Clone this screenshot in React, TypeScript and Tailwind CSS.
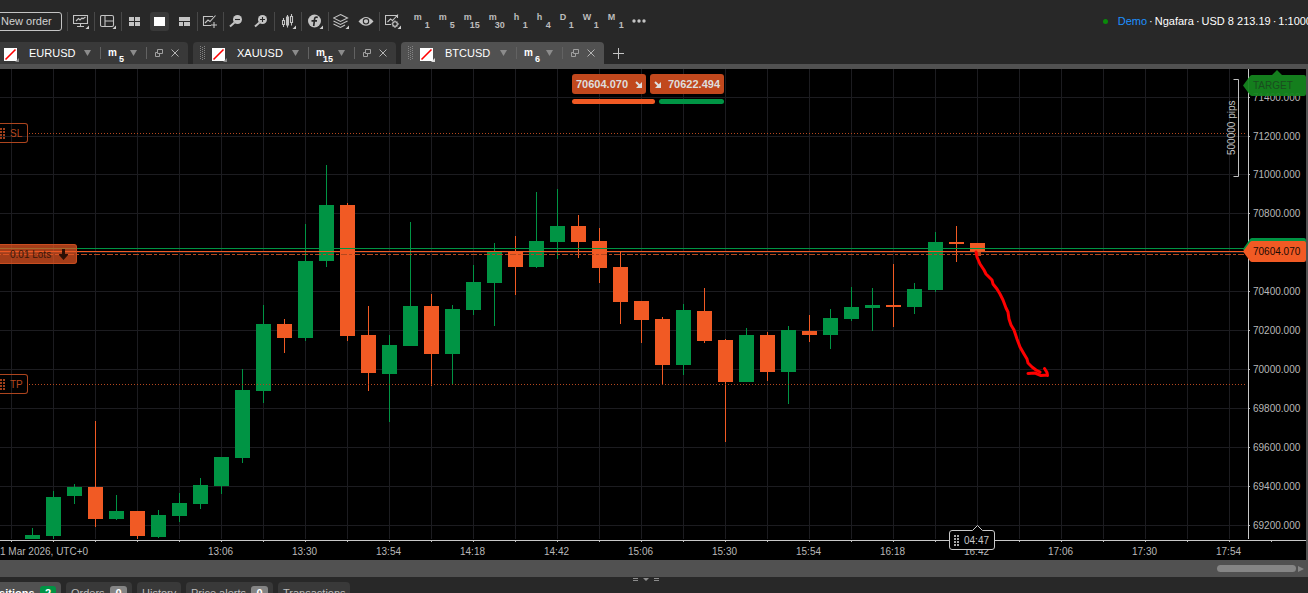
import React from 'react';

type Candle = [number, number, number, number, 'g' | 'o'];

const GREEN = '#009444';
const ORANGE = '#f15a24';

// high, body top, body bottom, low (pixels from the top of the plot)
const candles: Candle[] = [
  [459, 466, 470, 470, 'g'], [422, 428, 467, 470, 'g'], [415, 418, 427, 435, 'g'], [352, 418, 450, 458, 'o'],
  [426, 442, 450, 451, 'g'], [442, 442, 467, 470, 'o'], [441, 446, 468, 469, 'g'], [424, 434, 447, 453, 'g'],
  [409, 416, 435, 440, 'g'], [388, 388, 417, 425, 'g'], [300, 321, 389, 394, 'g'], [236, 255, 322, 334, 'g'],
  [250, 255, 269, 284, 'o'], [155, 192, 269, 272, 'g'], [96, 136, 192, 198, 'g'], [134, 136, 267, 272, 'o'],
  [237, 266, 304, 322, 'o'], [266, 276, 305, 353, 'g'], [153, 237, 277, 277, 'g'], [225, 237, 285, 317, 'o'],
  [236, 240, 285, 315, 'g'], [196, 213, 241, 246, 'g'], [174, 182, 214, 257, 'g'], [167, 182, 198, 226, 'o'],
  [123, 172, 198, 199, 'g'], [120, 157, 173, 190, 'g'], [146, 157, 173, 189, 'o'], [159, 172, 199, 214, 'o'],
  [182, 198, 233, 255, 'o'], [232, 232, 251, 274, 'o'], [248, 250, 296, 315, 'o'], [235, 241, 296, 306, 'g'],
  [219, 242, 272, 274, 'o'], [270, 271, 313, 373, 'o'], [259, 266, 313, 313, 'g'], [263, 266, 303, 312, 'o'],
  [257, 261, 303, 335, 'g'], [246, 262, 266, 273, 'o'], [240, 249, 266, 280, 'g'], [218, 238, 250, 252, 'g'],
  [219, 236, 239, 262, 'g'], [195, 236, 238, 258, 'o'], [214, 220, 238, 245, 'g'], [163, 173, 221, 223, 'g'],
  [157, 173, 175, 193, 'o'], [174, 174, 183, 183, 'o'],
];

const prices: [number, string][] = [
  [28, '71400.000'], [67, '71200.000'], [105, '71000.000'], [144, '70800.000'], [183, '70600.000'], [222, '70400.000'],
  [261, '70200.000'], [300, '70000.000'], [339, '69800.000'], [378, '69600.000'], [417, '69400.000'], [456, '69200.000'],
];

const times = ['13:06', '13:30', '13:54', '14:18', '14:42', '15:06', '15:30', '15:54', '16:18', '16:42', '17:06', '17:30', '17:54'];
const columns = Array.from({ length: 31 }, (_, i) => 11 + i * 42);

const timeframes: [string, string, string][] = [
  ['m', '1', 'w-4'], ['m', '5', 'w-4'], ['m', '15', 'w-4'], ['m', '30', 'w-4'], ['h', '1', 'w-[14px]'],
  ['h', '4', 'w-[14px]'], ['D', '1', 'w-[14px]'], ['W', '1', 'w-4'], ['M', '1', 'w-4'],
];

function Sep() {
  return <span className="h-[19px] w-px shrink-0 bg-[#484848]" />;
}

function Tool({ label, children, wide, menu }: { label: string; children: React.ReactNode; wide?: boolean; menu?: boolean }) {
  return (
    <button type="button" aria-label={label} className={`relative flex h-5 shrink-0 items-center justify-center ${wide ? 'w-[26px]' : 'w-[25px]'}`}>
      <svg width="16" height="16" viewBox="0 0 16 16" fill="none" stroke="#c4c4c4" strokeWidth="1.1">
        {children}
        {menu && <path d="M16 12.5V16h-3.5z" fill="#d0d0d0" stroke="none" />}
      </svg>
    </button>
  );
}

function Down() {
  return <svg width="7" height="6" viewBox="0 0 7 6" className="shrink-0"><path d="M0 0h7L3.500 6z" fill="#8c8c8c" /></svg>;
}

function Grip({ color }: { color: string }) {
  return (
    <svg width="5" height="11" viewBox="0 0 5 11" fill={color} className="shrink-0">
      {[0, 3, 6, 9].map((y) => (
        <g key={y}><rect y={y} width="2" height="2" /><rect x="3" y={y} width="2" height="2" /></g>
      ))}
    </svg>
  );
}

function SymbolTab({ name, tf, active, first }: { name: string; tf: string; active?: boolean; first?: boolean }) {
  return (
    <div className={`flex h-[22px] w-[203px] shrink-0 items-center rounded-t-[4px] ${active ? 'bg-[#515151]' : 'bg-[#393939]'} ${first ? '-ml-[15px]' : ''}`}>
      <svg width="5" height="14" viewBox="0 0 5 14" fill="#858585" className="ml-[7px]">
        {[0, 2, 4, 6, 8, 10, 12].map((y) => (
          <g key={y}><rect y={y} width="1" height="1" /><rect x="2" y={y + 1} width="1" height="1" /><rect x="4" y={y} width="1" height="1" /></g>
        ))}
      </svg>
      <button type="button" aria-label={`${name} link colour`} className="ml-[7px] mt-[3px]">
        <svg width="15" height="14" viewBox="0 0 15 14">
          <rect width="13" height="13" fill="#fff" />
          <path d="M1.500 11.500L11.500 1.500" stroke="#f00" strokeWidth="1.600" />
          <path d="M15 10v4h-4z" fill={active ? '#ddd' : '#8a8a8a'} />
        </svg>
      </button>
      <button type="button" className="ml-[10px] flex w-[62px] items-center justify-between text-left text-[11px] leading-4 text-white">
        {name}
        <Down />
      </button>
      <span className="ml-[9px] h-3 w-px bg-[#626262]" />
      <button type="button" aria-label={`m${tf}`} className="ml-[7px] flex w-[29px] items-center justify-between text-white">
        <span className="flex text-[10px] leading-4 font-bold">
          m<span className={`${tf.length > 1 ? '-ml-[2px]' : 'ml-0.5'} translate-y-[6px] text-[9px]`}>{tf}</span>
        </span>
        <Down />
      </button>
      <span className="ml-[9px] h-3 w-px bg-[#626262]" />
      <button type="button" aria-label="Detach" className="ml-[8px]">
        <svg width="8" height="8" viewBox="0 0 8 8" fill="none" stroke="#a0a0a0">
          <path d="M2.500.5h5v4h-5zM2.500 3.500h-2v4h4v-3" />
        </svg>
      </button>
      <button type="button" aria-label="Close" className="ml-[8px]">
        <svg width="8" height="8" viewBox="0 0 8 8" stroke="#b4b4b4"><path d="M.5.5l7 7M7.500.5l-7 7" /></svg>
      </button>
    </div>
  );
}

function Toolbar() {
  return (
    <header className="flex h-[42px] shrink-0 items-center">
      <button type="button" className="-ml-2 mr-[5px] h-[19px] shrink-0 rounded-[3px] border border-[#c4c4c4] pr-[9px] pl-2 text-[11px] leading-4 text-[#d2d2d2]">New order</button>
      <Sep />
      <Tool label="Chart type" wide menu>
        <path d="M.5 2.500h14v8H.5zM7.500 10.500v2.500M4 13.500h7M3 8l2.500-2.500 1.500 1.500 2-2 1 .8L12.500 4" />
      </Tool>
      <Sep />
      <Tool label="Layout" wide menu>
        <rect x=".5" y="2.500" width="13" height="11" rx="1.500" /><path d="M5 2.500v11M5 8h8.500" />
      </Tool>
      <Sep />
      <Tool label="Multi chart"><path fill="#c4c4c4" stroke="none" d="M3 4h5v4H3zM9 4h5v4H9zM3 9h5v4H3zM9 9h5v4H9z" /></Tool>
      <button type="button" aria-label="Single chart" className="flex w-[25px] shrink-0 items-center justify-center">
        <span className="flex size-[19px] items-center justify-center rounded-[3px] bg-[#393939]"><span className="h-[9px] w-[11px] bg-white" /></span>
      </button>
      <Tool label="Free chart"><path fill="#c4c4c4" stroke="none" d="M3 4h11v4H3zM3 9h4v4H3zM8 9h6v4H8z" /></Tool>
      <Sep />
      <Tool label="New chart">
        <path d="M11 3.500H1.500v9H9M3 10l3-3 2 1.500 5.500-6M12 9v6M9 12h6" />
      </Tool>
      <Sep />
      <Tool label="Zoom out">
        <circle cx="9.500" cy="6.500" r="4.500" fill="#c4c4c4" stroke="none" /><path d="M6.500 9.500L2 13.500" strokeWidth="2" /><path d="M7 6.500h5" stroke="#282828" />
      </Tool>
      <Tool label="Zoom in">
        <circle cx="9.500" cy="6.500" r="4.500" fill="#c4c4c4" stroke="none" /><path d="M6.500 9.500L2 13.500" strokeWidth="2" /><path d="M7 6.500h5M9.500 4v5" stroke="#282828" />
      </Tool>
      <Sep />
      <Tool label="Chart style" wide menu>
        <path d="M3.500 5v2M3.500 12v2M7.500 2v2M7.500 12v2.500M11.500 1v2.500M11.500 10v2.500M2.500 7.500h2v4h-2zM10.500 3.500h2v6h-2z" /><path d="M6.500 4h2v8h-2z" fill="#c4c4c4" />
      </Tool>
      <Sep />
      <Tool label="Indicators" wide menu>
        <circle cx="7.500" cy="8" r="6.500" fill="#c4c4c4" stroke="none" /><path d="M10.800 4.500C8.500 3.500 7.700 4.600 7.500 6.500L6.700 13M4.500 7.800h5.500" stroke="#282828" strokeWidth="1.700" />
      </Tool>
      <Sep />
      <Tool label="Objects" menu>
        <path d="M7.500 1.500l7 3.500-7 3.500L.5 5zM.5 8l7 3.500 7-3.500M.5 11l7 3.500L12 12" />
      </Tool>
      <Tool label="Visibility">
        <path d="M.5 8.500Q8-.500 15.500 8.500 8 17 .5 8.500z" fill="#c4c4c4" stroke="none" /><circle cx="8" cy="8.300" r="2.700" stroke="#282828" />
      </Tool>
      <Sep />
      <Tool label="Chart settings" wide menu>
        <path d="M12.500 5V2.500H.5v9H6M2.500 9l3-3 2 1.500 5.500-6" /><circle cx="10" cy="11" r="2.300" /><path d="M10 7.500v1.200M10 13.300v1.700M6.500 11h1.200M12.300 11h1.700M7.600 8.600l.8.800M11.600 12.600l.8.800M12.400 8.600l-.8.800M7.600 13.400l.8-.8" />
      </Tool>
      <nav aria-label="Timeframes" className="ml-2 flex shrink-0 gap-[9px] pb-px text-[#bdbdbd]">
        {timeframes.map(([a, b, w]) => (
          <button key={a + b} type="button" className={`flex h-5 shrink-0 justify-between pt-px font-bold ${w}`}>
            <span className="text-[9px] leading-[11px]">{a}</span>
            <span className={`pt-2 text-[9px] leading-[11px] ${b.length > 1 ? '-ml-[2px]' : ''}`}>{b}</span>
          </button>
        ))}
      </nav>
      <button type="button" aria-label="More" className="ml-2 shrink-0">
        <svg width="14" height="4" viewBox="0 0 14 4" fill="#c4c4c4"><circle cx="2" cy="2" r="1.700" /><circle cx="7" cy="2" r="1.700" /><circle cx="12" cy="2" r="1.700" /></svg>
      </button>
      <div className="-mr-1 ml-auto flex shrink-0 items-center gap-0.5 text-[11px] leading-4 whitespace-nowrap text-white">
        <span className="mr-2 size-[5px] rounded-full bg-[#0a8a0a]" />
        <a href="#account" className="text-[#1e90ff]">Demo</a>
        <span>·</span>
        <span>Ngafara</span>
        <span>·</span>
        <span>USD 8 213.19</span>
        <span>·</span>
        <span>1:1000</span>
      </div>
    </header>
  );
}

function Plot() {
  return (
    <svg width="100%" height="471" className="block">
      <g fill="#1c1c20">
        {columns.map((x) => <rect key={x} x={x} y="0" width="1" height="470" />)}
        {prices.map(([y]) => <rect key={y} x="0" y={y} width="100%" height="1" />)}
      </g>
      {candles.map(([hi, top, bottom, lo, c], i) => (
        <g key={i} fill={c === 'g' ? GREEN : ORANGE}>
          <rect x={32 + i * 21} y={hi} width="1" height={lo - hi} />
          <rect x={25 + i * 21} y={top} width="15" height={bottom - top} />
        </g>
      ))}
      <g shapeRendering="crispEdges">
        <path d="M29 64.500H1246M29 315.500H1246" stroke="#b5481f" strokeDasharray="1 2" />
        <path d="M-2 185.500H1244" stroke="#b5481f" strokeDasharray="3 2 6 2" />
        <path d="M0 179.500H1246" stroke={GREEN} />
        <path d="M0 182.500H1246" stroke={ORANGE} />
      </g>
      <rect x="977" y="183" width="4" height="4" fill="#b5481f" />
      <g fill="none" stroke="#f00" strokeWidth="3" strokeLinejoin="round" strokeLinecap="round">
        <path d="M976 183l1 5 3 7 4 6 2 4 6 6 1 4 4 5 3 5 3 6 3 8 2 4 1 7 2 6 3 5 3 9 3 8 4 7 3 5 1 4 4 4 4 3 4 2" />
        <path d="M1028 304.500l7-.5 6 2.500 6-.5M1044.500 299.500l2.500 4 .5 3" />
      </g>
      <path d="M1233.500 10.500h5v97h-5" fill="none" stroke="#c0c0c0" />
      <text transform="translate(1235 86) rotate(-90)" fill="#c0c0c0" fontSize="10">500000 pips</text>
    </svg>
  );
}

function PriceAxis() {
  return (
    <div className="relative w-[58px] shrink-0">
      <svg width="58" height="471" className="block" fontSize="10" fill="#b8b8b8">
        <rect width="1" height="470" fill="#c8c8c8" />
        {prices.map(([y, label]) => (
          <g key={y}><rect x="1" y={y} width="1" height="1" /><text x="5" y={y + 4}>{label}</text></g>
        ))}
      </svg>
      <svg width="63" height="195" className="absolute top-0 -left-[5px]" fontSize="10">
        <path d="M0 16.500L7 7q1-1 2-1h20l5-5 5 5h22q2 0 2 2v17q0 2-2 2H9q-1 0-2-1z" fill="#15851f" fillOpacity=".95" />
        <text x="10" y="20" fill="#1a4d1f">TARGET</text>
        <path d="M0 180L7 170q1-1 2-1h52q2 0 2 2v15H4z" fill={GREEN} />
        <path d="M0 182.500L7 173q1-1 2-1h52q2 0 2 2v17q0 2-2 2H9q-1 0-2-1z" fill={ORANGE} />
        <text x="10" y="186" fill="#1a0a04">70604.070</text>
      </svg>
    </div>
  );
}

function QuoteArrow() {
  return <svg width="7" height="7" viewBox="0 0 7 7" className="shrink-0"><path d="M1 1l4 4" stroke="#dedede" strokeWidth="2" /><path d="M7 1v6H1z" fill="#dedede" /></svg>;
}

function Level({ name, top }: { name: string; top: string }) {
  return (
    <button type="button" className={`absolute left-0 flex h-5 w-7 items-center gap-[5px] rounded-r-[3px] border border-l-0 border-[#ad451e] text-[10px] leading-4 text-[#b5481f] ${top}`}>
      <Grip color="#a03f1b" /><span className="pt-0.5">{name}</span>
    </button>
  );
}

function Chart() {
  return (
    <section aria-label="BTCUSD chart" className="relative shrink-0 overflow-hidden border-r-2 border-[#515151] bg-black">
      <div className="flex">
        <div className="relative min-w-0 flex-1">
          <Plot />
          <Level name="SL" top="top-[54px]" />
          <Level name="TP" top="top-[305px]" />
          <button type="button" className="absolute top-[175px] left-0 flex h-5 w-[77px] items-center justify-between rounded-r-[3px] border border-l-0 border-[#c84d20] bg-[#ea5723]/70 pr-[8px] pl-[10px] text-[10px] leading-4 text-[#3a1608]">
            <span className="pt-0.5">0.01 Lots</span>
            <svg width="9" height="11" viewBox="0 0 9 11" fill="#2a0f05"><path d="M3 0h3v5h3v1L4.500 11 0 6V5h3z" /></svg>
          </button>
          <div className="absolute top-[5px] left-[572px] text-[11px] font-bold text-[#dedede]">
            <div className="flex gap-1">
              <button type="button" className="flex h-5 w-[74px] items-center justify-between rounded-[3px] bg-[#c1481d] px-1">70604.070<QuoteArrow /></button>
              <button type="button" className="flex h-5 w-[74px] items-center justify-between rounded-[3px] bg-[#c1481d] px-1"><QuoteArrow />70622.494</button>
            </div>
            <div className="mt-[5px] flex gap-1">
              <span className="h-[5px] w-[83px] rounded-full bg-[#f15a24]" />
              <span className="h-[5px] w-[65px] rounded-full bg-[#009444]" />
            </div>
          </div>
        </div>
        <PriceAxis />
      </div>
      <svg width="100%" height="20" className="block" fontSize="10" fill="#b8b8b8">
        <rect width="100%" height="1" fill="#c8c8c8" />
        {columns.map((x) => <rect key={x} x={x} y="1" width="1" height="1" />)}
        <text x="0" y="15">1 Mar 2026, UTC+0</text>
        {times.map((t, i) => <text key={t} x={220.5 + i * 84} y="15" textAnchor="middle">{t}</text>)}
      </svg>
      <div className="absolute bottom-[10px] left-[949px] text-[10px] text-[#c8c8c8]">
        <div className="flex h-5 w-[46px] items-center gap-[5px] rounded-[3px] border border-[#c8c8c8] bg-black pl-1">
          <Grip color="#a8a8a8" />04:47
        </div>
        <svg width="12" height="7" viewBox="0 0 12 7" className="absolute -top-[5px] left-[23px]"><path d="M.5 5.500l5-5 5 5V7H.5z" fill="#000" /><path d="M.5 5.500l5-5 5 5" fill="none" stroke="#c8c8c8" /></svg>
      </div>
    </section>
  );
}

const panelTabs: [string, string | null, string][] = [
  ['Orders', '0', 'w-[66px]'], ['History', null, 'w-11'], ['Price alerts', '0', 'w-[87px]'], ['Transactions', null, 'w-[72px]'],
];

export default function App() {
  return (
    <main className="flex h-screen flex-col overflow-hidden bg-[#282828] font-['Liberation_Sans',Arial,sans-serif]">
      <Toolbar />
      <div className="flex shrink-0 items-center gap-[5px] border-b-[5px] border-[#515151]">
        <SymbolTab name="EURUSD" tf="5" first />
        <SymbolTab name="XAUUSD" tf="15" />
        <SymbolTab name="BTCUSD" tf="6" active />
        <button type="button" aria-label="Add chart" className="ml-1">
          <svg width="11" height="11" viewBox="0 0 11 11" stroke="#c4c4c4"><path d="M5.500 0v11M0 5.500h11" /></svg>
        </button>
      </div>
      <Chart />
      <div className="flex h-[17px] shrink-0 items-center justify-end gap-[2px] bg-[#515151] pr-1">
        <span className="h-[7px] w-[79px] rounded-full bg-[#858585]" />
        <svg width="6" height="6" viewBox="0 0 6 6"><path d="M0 0l6 3-6 3z" fill="#858585" /></svg>
      </div>
      <div className="flex h-[5px] shrink-0 justify-center pr-4">
        <svg width="26" height="4" viewBox="0 0 26 4" fill="#8c8c8c"><path d="M0 1h5v1H0zM0 3h5v1H0zM21 1h5v1h-5zM21 3h5v1h-5zM10 1h6l-3 3z" /></svg>
      </div>
      <nav aria-label="Trade panel" className="flex shrink-0 gap-[5px] text-[11px] leading-4 text-[#bdbdbd]">
        <button type="button" className="-ml-[22px] flex h-[22px] w-[83px] items-center justify-between rounded-t-[4px] bg-[#515151] pr-[5px] pl-[7px] font-bold text-white">
          Positions<span className="h-[14px] w-4 rounded-[3px] bg-[#009444] leading-[14px]">2</span>
        </button>
        {panelTabs.map(([name, count, w]) => (
          <button key={name} type="button" className={`flex h-[22px] items-center justify-between rounded-t-[4px] bg-[#393939] px-[5px] ${w}`}>
            {name}{count && <span className="h-[14px] w-[17px] rounded-[3px] bg-[#858585] leading-[14px] font-bold text-white">{count}</span>}
          </button>
        ))}
      </nav>
    </main>
  );
}
